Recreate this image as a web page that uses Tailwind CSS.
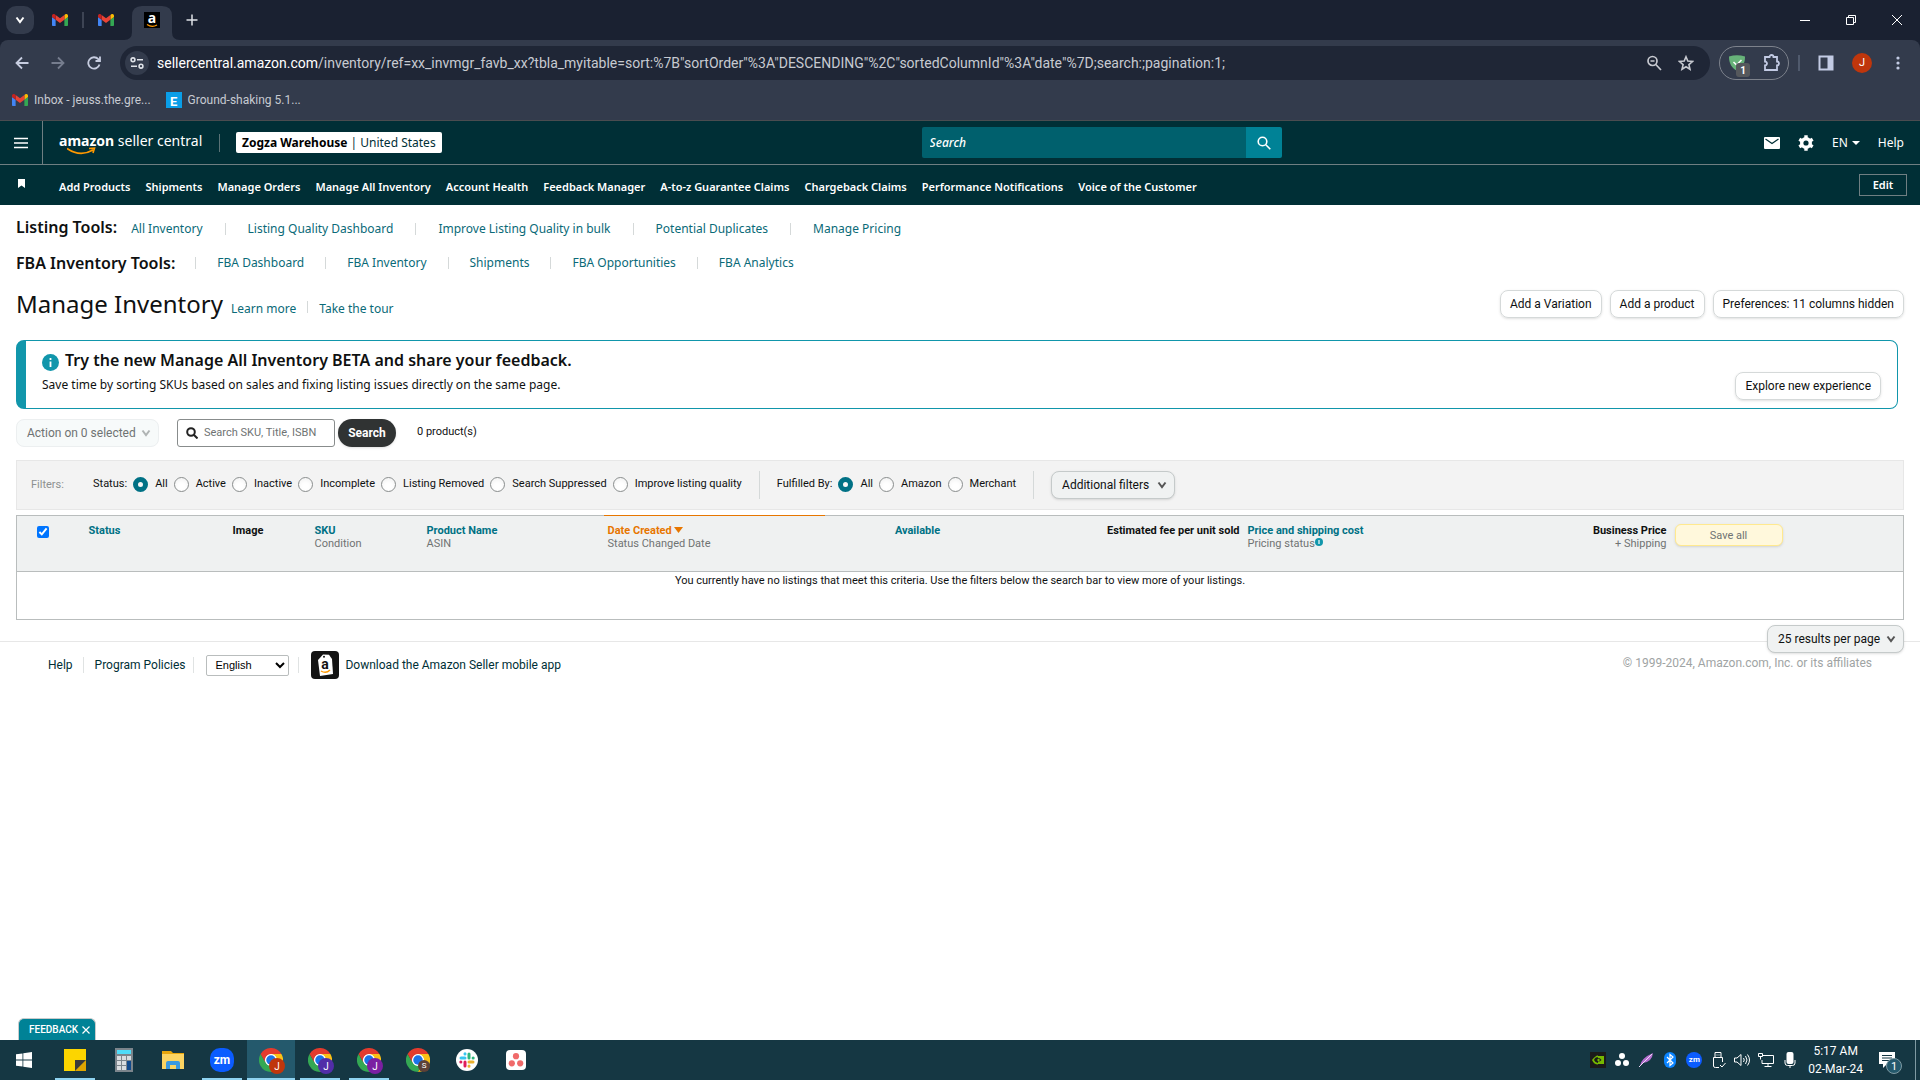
<!DOCTYPE html>
<html lang="en">
<head>
    <meta charset="UTF-8">
    <meta name="viewport" content="width=device-width, initial-scale=1.0">
    <title>Manage Inventory</title>
    <script src="https://cdn.jsdelivr.net/npm/@tailwindcss/browser@4"></script>
</head>
<body class="flex min-h-screen flex-col bg-white font-['Roboto',sans-serif] text-[11px] text-[#0f1111]">
    <!-- shared icons -->
    <svg class="hidden">
        <symbol id="gmail" viewBox="52 42 88 66">
            <path fill="#4285f4" d="M58 108h14V74L52 59v43c0 3.32 2.69 6 6 6"/>
            <path fill="#34a853" d="M120 108h14c3.32 0 6-2.69 6-6V59l-20 15"/>
            <path fill="#fbbc04" d="M120 48v26l20-15v-8c0-7.42-8.47-11.65-14.4-7.2"/>
            <path fill="#ea4335" d="M72 74V48l24 18 24-18v26L96 92"/>
            <path fill="#c5221f" d="M52 51v8l20 15V48l-5.6-4.2c-5.94-4.45-14.4-.22-14.4 7.2"/>
        </symbol>
        <symbol id="chrome" viewBox="0 0 48 48">
            <circle cx="24" cy="24" r="13" fill="#fff"/>
            <path fill="#34a853" d="M13.6 30 3.2 12A24 24 0 0 0 24 48l10.4-18a12 12 0 0 1-20.8 0z"/>
            <path fill="#fbc116" d="M34.4 30 24 48a24 24 0 0 0 20.8-36H24a12 12 0 0 1 10.4 18z"/>
            <path fill="#e33b2e" d="M24 12h20.8A24 24 0 0 0 3.2 12l10.4 18A12 12 0 0 1 24 12z"/>
            <circle cx="24" cy="24" r="9.5" fill="#1a73e8"/>
        </symbol>
        <symbol id="chevron" viewBox="0 0 10 8">
            <path d="M1.5 1.5 5 6l3.500-4.500" fill="none" stroke="currentColor" stroke-width="2"/>
        </symbol>
    </svg>

    <!-- browser -->
    <header class="bg-[#1a2131] text-[#c7cad1]">
        <div class="flex h-10 items-center pl-1.5">
            <button aria-label="Search tabs" class="grid size-7 place-items-center rounded-[10px] bg-[#333b4c]">
                <svg class="h-2 w-2.5 text-white"><use href="#chevron"/></svg>
            </button>
            <a href="#" aria-label="Gmail" class="ml-[18px]"><svg class="h-3 w-4"><use href="#gmail"/></svg></a>
            <div class="mx-[14px] h-4 w-0.5 bg-[#3d4454]"></div>
            <a href="#" aria-label="Gmail"><svg class="h-3 w-4"><use href="#gmail"/></svg></a>
            <a href="#" aria-label="Amazon" class="relative ml-[18px] grid h-full w-10 place-items-center">
                <svg class="absolute -left-2 bottom-0 h-[34px] w-14" viewBox="0 0 56 34"><path d="M0 34q8 0 8-8V10Q8 0 18 0h20q10 0 10 10v16q0 8 8 8z" fill="#333b4c"/></svg>
                <span class="relative grid size-4 place-items-center bg-black font-['Noto_Sans',sans-serif] text-[14px] font-bold leading-3 text-white"><span class="-mt-1">a</span>
                    <svg class="absolute inset-0 size-4" viewBox="0 0 16 16"><path d="M3 12.500q5 3.500 10 .5" stroke="#f90" stroke-width="1.300" fill="none"/></svg>
                </span>
            </a>
            <button aria-label="New tab" class="ml-3.5"><svg class="size-3" viewBox="0 0 12 12" stroke="#dfe2e8" stroke-width="1.500"><path d="M6 .5v11M.5 6h11"/></svg></button>
            <div class="ml-auto flex text-white">
                <button aria-label="Minimize" class="grid h-10 w-[46px] place-items-center"><svg class="size-2.5" viewBox="0 0 10 10" stroke="currentColor"><path d="M0 5.500h10"/></svg></button>
                <button aria-label="Restore" class="grid h-10 w-[46px] place-items-center"><svg class="size-2.5" viewBox="0 0 10 10" stroke="currentColor" fill="none"><path d="M.5 2.500h7v7h-7zM2.500 2.500v-2h7v7h-2"/></svg></button>
                <button aria-label="Close" class="grid h-10 w-[46px] place-items-center"><svg class="size-2.5" viewBox="0 0 10 10" stroke="currentColor"><path d="m0 0 10 10M10 0 0 10"/></svg></button>
            </div>
        </div>
        <div class="rounded-t-lg border-b border-[#4a4c50] bg-[#333b4c] pt-1.5">
            <div class="flex h-[34px] items-center pl-3 pr-[13px]">
                <button aria-label="Back" class="grid w-5 place-items-center"><svg class="size-3.5" viewBox="0 0 14 14" fill="none" stroke="#c7cde0" stroke-width="1.800"><path d="M13.500 7H1.500M7 1.500 1.500 7 7 12.500"/></svg></button>
                <button aria-label="Forward" class="ml-4 grid w-5 place-items-center"><svg class="size-3.5" viewBox="0 0 14 14" fill="none" stroke="#767d8e" stroke-width="1.800"><path d="M.5 7h12M7 1.500 12.500 7 7 12.500"/></svg></button>
                <button aria-label="Reload" class="ml-4 grid w-5 place-items-center"><svg class="size-3.5" viewBox="0 0 14 14" fill="none" stroke="#c7cde0" stroke-width="1.800"><path d="M12.500 8.500A5.700 5.700 0 1 1 11.300 3.200L13 5M13 .5V5H8.500"/></svg></button>
                <div class="ml-4 flex h-full flex-1 items-center rounded-full bg-[#1f2636] pl-[5px] pr-4">
                    <button aria-label="Site information" class="grid size-6 place-items-center rounded-full bg-[#333b4c]"><svg class="h-3 w-3.5" viewBox="0 0 14 12" fill="none" stroke="#dfe2e8" stroke-width="1.600"><circle cx="3" cy="2.800" r="1.900"/><path d="M7 2.800h6M1 9.200h6"/><circle cx="11" cy="9.200" r="1.900"/></svg></button>
                    <p class="ml-2 text-[14px] leading-5"><span class="text-white">sellercentral.amazon.com</span>/inventory/ref=xx_invmgr_favb_xx?tbla_myitable=sort:%7B"sortOrder"%3A"DESCENDING"%2C"sortedColumnId"%3A"date"%7D;search:;pagination:1;</p>
                    <button aria-label="Zoom" class="ml-auto"><svg class="size-4" viewBox="0 0 16 16" fill="none" stroke="#c7c9d0" stroke-width="1.700"><circle cx="6.500" cy="6" r="4.500"/><path d="M9.800 9.500 15 15M4.500 6h4"/></svg></button>
                    <button aria-label="Bookmark" class="ml-4"><svg class="size-4" viewBox="0 0 16 16" fill="none" stroke="#c7c9d0" stroke-width="1.600"><path d="m8 1.800 1.800 4.300 4.700.4-3.600 3.100 1.100 4.600L8 11.700l-4 2.500 1.100-4.600-3.600-3.100 4.700-.4z"/></svg></button>
                </div>
                <div class="ml-[9px] flex h-full w-[70px] items-center justify-between rounded-full border border-[#7d828c] pl-[9px] pr-[7px]">
                    <button aria-label="Blocker, 1 blocked" class="relative size-4">
                        <svg class="size-4" viewBox="0 0 16 16"><path d="M0 1.500Q8-1 16 1.500C16 9 13 13 8 16 3 13 0 9 0 1.500z" fill="#67b279"/><path d="m4.500 7 3 3 5-5" stroke="#fff" stroke-width="1.500" fill="none"/></svg>
                        <span class="absolute left-[7px] top-2 grid h-3.5 w-3.5 place-items-center rounded-[3px] bg-[#55585c] text-[10px] font-bold text-white">1</span>
                    </button>
                    <button aria-label="Extensions"><svg class="size-[18px]" viewBox="0 0 18 18" fill="none" stroke="#c3cbe4" stroke-width="1.800"><path d="M2 3h4.500a2 2 0 0 1 4 0H14v4.500a2 2 0 0 1 0 4V16H2v-4.500a2 2 0 0 0 0-4z"/></svg></button>
                </div>
                <div class="ml-[9px] h-4 w-0.5 bg-[#505a6d]"></div>
                <button aria-label="Side panel" class="ml-[18px]"><svg class="size-4" viewBox="0 0 16 16"><path d="M1.500 1.500h13v13h-13z" fill="none" stroke="#c3cbe4" stroke-width="2"/><path d="M9.500 1h5.500v14H9.500z" fill="#c3cbe4"/></svg></button>
                <button class="ml-[18px] grid size-5 place-items-center rounded-full bg-[#bf360c] text-[11px] text-white">J</button>
                <button aria-label="Menu" class="ml-[17px] grid w-[18px] place-items-center"><svg class="h-3.5 w-1" viewBox="0 0 4 14" fill="#c3cbe4"><circle cx="2" cy="2" r="1.600"/><circle cx="2" cy="7" r="1.600"/><circle cx="2" cy="12" r="1.600"/></svg></button>
            </div>
            <div class="flex h-10 items-center pl-3 text-[12px]">
                <svg class="h-3 w-4"><use href="#gmail"/></svg>
                <a href="#" class="ml-1.5">Inbox - jeuss.the.gre...</a>
                <span class="ml-[15px] grid size-4 place-items-center bg-[#0a9ee8] text-[13px] font-bold text-white">E</span>
                <a href="#" class="ml-1.5">Ground-shaking 5.1...</a>
            </div>
        </div>
    </header>

    <!-- seller central header -->
    <nav class="bg-[#002f36] font-['Noto_Sans',sans-serif] text-white">
        <div class="flex h-11 items-center border-b border-[#6f7f82]">
            <button aria-label="Menu" class="grid h-full w-[43px] place-items-center border-r border-[#6f7f82] pr-px"><svg class="h-3 w-3.5" viewBox="0 0 14 12" stroke="#fff" stroke-width="1.500"><path d="M0 1.500h14M0 6h14M0 10.500h14"/></svg></button>
            <a href="#" class="relative -mt-1 ml-4 w-36 whitespace-nowrap text-[14px] leading-5"><b>amazon</b> seller central
                <svg class="absolute left-2 top-4 h-2.5 w-[30px]" viewBox="0 0 30 10" fill="none" stroke="#f90" stroke-width="1.600"><path d="M0 1.500q13 9 26 1.500M22 1.500l5.500-.3L26 6"/></svg>
            </a>
            <div class="ml-4 h-[18px] w-px bg-[#5a7276]"></div>
            <button class="ml-4 h-[21px] whitespace-nowrap rounded-xs bg-white px-1.5 text-[12px] text-[#002f36]"><b class="text-black">Zogza Warehouse</b> | United States</button>
            <form class="absolute left-[48%] flex h-[31px] w-[360px]">
                <input type="text" aria-label="Search" placeholder="Search" class="min-w-0 flex-1 rounded-l-xs bg-[#00606d] px-2 text-[12px] font-medium italic placeholder:text-white">
                <button aria-label="Submit search" class="grid w-9 place-items-center rounded-r-xs bg-[#008296]"><svg class="size-3.5" viewBox="0 0 14 14" fill="none" stroke="#fff" stroke-width="1.600"><circle cx="5.500" cy="5.500" r="4.300"/><path d="m8.800 8.800 4.500 4.500"/></svg></button>
            </form>
            <div class="ml-auto flex items-center pr-4 text-[12px]">
                <a href="#" aria-label="Mail"><svg class="h-3 w-4" viewBox="0 0 16 12"><rect width="16" height="12" rx="1" fill="#fff"/><path d="m1.500 2 6.500 4.500L14.500 2" fill="none" stroke="#002f36" stroke-width="1.200"/></svg></a>
                <a href="#" aria-label="Settings" class="ml-[18px]"><svg class="size-4" viewBox="0 0 16 16"><circle cx="8" cy="8" r="4.200" fill="none" stroke="#fff" stroke-width="3.600"/><path d="M8 .3v15.400M1.300 4.200l13.400 7.600M1.300 11.800l13.400-7.600" stroke="#fff" stroke-width="3.400"/><circle cx="8" cy="8" r="2.600" fill="#002f36"/></svg></a>
                <button class="ml-[18px] flex items-center gap-1">EN <svg class="h-1 w-2" viewBox="0 0 8 4" fill="#fff"><path d="M0 0h8L4 4z"/></svg></button>
                <a href="#" class="ml-[18px]">Help</a>
            </div>
        </div>
        <div class="flex h-10 items-center pl-[18px] pr-[13px]">
            <svg class="-mt-1 h-[9px] w-[7px]" viewBox="0 0 7 9" fill="#fff"><path d="M0 0h7v9L3.500 6.500 0 9z"/></svg>
            <div class="ml-[34px] mt-1 flex gap-[15px] whitespace-nowrap text-[11px] font-semibold">
                <a href="#">Add Products</a>
                <a href="#">Shipments</a>
                <a href="#">Manage Orders</a>
                <a href="#">Manage All Inventory</a>
                <a href="#">Account Health</a>
                <a href="#">Feedback Manager</a>
                <a href="#">A-to-z Guarantee Claims</a>
                <a href="#">Chargeback Claims</a>
                <a href="#">Performance Notifications</a>
                <a href="#">Voice of the Customer</a>
            </div>
            <button class="ml-auto h-[22px] w-12 border border-[#6f7f82] font-semibold">Edit</button>
        </div>
    </nav>

    <main class="relative flex-1">
        <div class="px-4 pt-2.5">
            <div class="flex h-6 items-baseline gap-3.5 font-['Noto_Sans',sans-serif] text-[12px] text-[#0a6a78]">
                <h2 class="text-[16px] font-semibold leading-6 text-[#0f1111]">Listing Tools:</h2>
                <div class="flex items-center gap-[22px]">
                    <a href="#">All Inventory</a><i class="h-3 w-px bg-[#d5d9d9]"></i>
                    <a href="#">Listing Quality Dashboard</a><i class="h-3 w-px bg-[#d5d9d9]"></i>
                    <a href="#">Improve Listing Quality in bulk</a><i class="h-3 w-px bg-[#d5d9d9]"></i>
                    <a href="#">Potential Duplicates</a><i class="h-3 w-px bg-[#d5d9d9]"></i>
                    <a href="#">Manage Pricing</a>
                </div>
            </div>
            <div class="mt-3 flex h-6 items-baseline gap-5 font-['Noto_Sans',sans-serif] text-[12px] text-[#0a6a78]">
                <h2 class="text-[16px] font-semibold leading-6 text-[#0f1111]">FBA Inventory Tools:</h2>
                <div class="flex items-center gap-[21px]">
                    <i class="h-3 w-px bg-[#d5d9d9]"></i>
                    <a href="#">FBA Dashboard</a><i class="h-3 w-px bg-[#d5d9d9]"></i>
                    <a href="#">FBA Inventory</a><i class="h-3 w-px bg-[#d5d9d9]"></i>
                    <a href="#">Shipments</a><i class="h-3 w-px bg-[#d5d9d9]"></i>
                    <a href="#">FBA Opportunities</a><i class="h-3 w-px bg-[#d5d9d9]"></i>
                    <a href="#">FBA Analytics</a>
                </div>
            </div>
            <div class="mt-[11px] flex items-center">
                <div class="flex items-baseline font-['Noto_Sans',sans-serif] text-[12px] text-[#0a6a78]">
                    <h1 class="text-[24px] leading-9 text-[#0f1111]">Manage Inventory</h1>
                    <a href="#" class="ml-2">Learn more</a>
                    <i class="mx-[11px] h-3 w-px bg-[#d5d9d9]"></i>
                    <a href="#">Take the tour</a>
                </div>
                <div class="ml-auto flex gap-2 text-[12px]">
                    <button class="h-7 rounded-lg border border-[#d5d9d9] px-[9px] shadow-sm">Add a Variation</button>
                    <button class="h-7 rounded-lg border border-[#d5d9d9] px-[9px] shadow-sm">Add a product</button>
                    <button class="h-7 rounded-lg border border-[#d5d9d9] px-[9px] shadow-sm">Preferences: 11 columns hidden</button>
                </div>
            </div>

            <section class="mr-1.5 mt-[18px] flex h-[69px] rounded-lg border border-l-10 border-[#1196ab] pl-4 pr-4">
                <div class="pt-[7px] font-['Noto_Sans',sans-serif]">
                    <h3 class="flex items-center gap-1.5 text-[16px] font-semibold leading-6">
                        <svg class="mt-1 size-[17px]" viewBox="0 0 17 17"><circle cx="8.500" cy="8.500" r="8.500" fill="#1196ab"/><path d="M8.500 7.500v5.500M8.500 4v2" stroke="#fff" stroke-width="1.800"/></svg>
                        Try the new Manage All Inventory BETA and share your feedback.
                    </h3>
                    <p class="mt-px text-[12px] leading-6">Save time by sorting SKUs based on sales and fixing listing issues directly on the same page.</p>
                </div>
                <button class="mb-2 ml-auto h-7 self-end rounded-lg border border-[#d5d9d9] px-[9px] text-[12px] shadow-sm">Explore new experience</button>
            </section>

            <div class="mt-2.5 flex h-7 items-center">
                <button disabled class="flex h-7 w-[143px] items-center justify-between whitespace-nowrap rounded-lg border border-[#eceff0] bg-[#f7fafa] pl-2.5 pr-[7px] text-[12px] text-[#6f7373]">Action on 0 selected <svg class="h-2 w-2.5 text-[#b0b4b4]"><use href="#chevron"/></svg></button>
                <label class="ml-[18px] flex h-7 w-[158px] items-center gap-1.5 rounded-[3px] border border-[#888c8c] px-2">
                    <svg class="size-3 shrink-0" viewBox="0 0 12 12" fill="none" stroke="#222" stroke-width="2"><circle cx="5" cy="5" r="3.800"/><path d="m7.800 7.800 3.700 3.700"/></svg>
                    <input type="text" aria-label="Search listings" placeholder="Search SKU, Title, ISBN" class="w-full min-w-0 text-[11px] placeholder:text-[#6f7373]">
                </label>
                <button class="ml-[3px] h-7 w-[58px] rounded-full bg-[#303333] text-[12px] font-bold text-white shadow-sm">Search</button>
                <span class="-mt-0.5 ml-[21px]">0 product(s)</span>
            </div>

            <form class="mt-[13px] flex h-[50px] items-center whitespace-nowrap border border-[#e7e7e7] bg-[#f3f3f3] px-3.5">
                <span class="w-[62px] text-[#8d9191]">Filters:</span>
                <fieldset class="-mt-0.5 flex items-center">
                    <legend class="contents"><span>Status:</span></legend>
                    <label class="ml-1.5 flex items-center gap-[7px]"><input type="radio" name="status" checked class="size-[15px] appearance-none rounded-full border border-[#888c8c] bg-white shadow-inner checked:border-5 checked:border-[#007185]">All</label>
                    <label class="ml-1.5 flex items-center gap-[7px]"><input type="radio" name="status" class="size-[15px] appearance-none rounded-full border border-[#888c8c] bg-white shadow-inner checked:border-5 checked:border-[#007185]">Active</label>
                    <label class="ml-1.5 flex items-center gap-[7px]"><input type="radio" name="status" class="size-[15px] appearance-none rounded-full border border-[#888c8c] bg-white shadow-inner checked:border-5 checked:border-[#007185]">Inactive</label>
                    <label class="ml-1.5 flex items-center gap-[7px]"><input type="radio" name="status" class="size-[15px] appearance-none rounded-full border border-[#888c8c] bg-white shadow-inner checked:border-5 checked:border-[#007185]">Incomplete</label>
                    <label class="ml-1.5 flex items-center gap-[7px]"><input type="radio" name="status" class="size-[15px] appearance-none rounded-full border border-[#888c8c] bg-white shadow-inner checked:border-5 checked:border-[#007185]">Listing Removed</label>
                    <label class="ml-1.5 flex items-center gap-[7px]"><input type="radio" name="status" class="size-[15px] appearance-none rounded-full border border-[#888c8c] bg-white shadow-inner checked:border-5 checked:border-[#007185]">Search Suppressed</label>
                    <label class="ml-1.5 flex items-center gap-[7px]"><input type="radio" name="status" class="size-[15px] appearance-none rounded-full border border-[#888c8c] bg-white shadow-inner checked:border-5 checked:border-[#007185]">Improve listing quality</label>
                </fieldset>
                <i class="mx-[17px] h-7 w-px bg-[#d5d9d9]"></i>
                <fieldset class="-mt-0.5 flex items-center">
                    <legend class="contents"><span>Fulfilled By:</span></legend>
                    <label class="ml-1.5 flex items-center gap-[7px]"><input type="radio" name="fulfilled" checked class="size-[15px] appearance-none rounded-full border border-[#888c8c] bg-white shadow-inner checked:border-5 checked:border-[#007185]">All</label>
                    <label class="ml-1.5 flex items-center gap-[7px]"><input type="radio" name="fulfilled" class="size-[15px] appearance-none rounded-full border border-[#888c8c] bg-white shadow-inner checked:border-5 checked:border-[#007185]">Amazon</label>
                    <label class="ml-1.5 flex items-center gap-[7px]"><input type="radio" name="fulfilled" class="size-[15px] appearance-none rounded-full border border-[#888c8c] bg-white shadow-inner checked:border-5 checked:border-[#007185]">Merchant</label>
                </fieldset>
                <i class="mx-[17px] h-7 w-px bg-[#d5d9d9]"></i>
                <button type="button" class="flex h-7 w-[124px] items-center justify-between rounded-lg border border-[#c5caca] bg-[#f0f2f2] pl-2.5 pr-[7px] text-[12px] shadow">Additional filters <svg class="h-2 w-2.5 text-[#555]"><use href="#chevron"/></svg></button>
            </form>

            <table class="mt-[5px] w-full table-fixed border border-[#b9bdbd] text-left leading-[13px]">
                <colgroup>
                    <col class="w-[66px]"><col class="w-36"><col class="w-[81px]"><col class="w-28"><col class="w-[184px]"><col class="w-[221px]"><col class="w-[186px]"><col class="w-[233px]"><col class="w-[257px]"><col class="w-[170px]"><col>
                </colgroup>
                <thead class="bg-[#eff1f1]">
                    <tr class="h-14 border-b border-[#b9bdbd] align-top">
                        <th class="pl-5 pt-2.5"><input type="checkbox" checked aria-label="Select all" class="block size-3 accent-[#0075ff]"></th>
                        <th class="pl-1.5 pt-2 text-[#007185]">Status</th>
                        <th class="pl-1.5 pt-2">Image</th>
                        <th class="pl-[7px] pt-2 text-[#007185]">SKU<br><span class="font-normal text-[#6f7373]">Condition</span></th>
                        <th class="pl-[7px] pt-2 text-[#007185]">Product Name<br><span class="font-normal text-[#6f7373]">ASIN</span></th>
                        <th class="border-t border-[#e77600] pl-1 pt-2 text-[#e77600]">Date Created <svg class="mb-0.5 inline h-1.5 w-[9px]" viewBox="0 0 9 6" fill="#e77600"><path d="M0 0h9L4.500 6z"/></svg><br><span class="font-normal text-[#6f7373]">Status Changed Date</span></th>
                        <th class="pt-2 text-center text-[#007185]">Available</th>
                        <th class="pr-1 pt-2 text-right">Estimated fee per unit sold</th>
                        <th class="pl-1 pt-2 text-[#007185]">Price and shipping cost<br><span class="font-normal text-[#6f7373]">Pricing status</span><svg class="mb-1 inline size-2" viewBox="0 0 8 8"><circle cx="4" cy="4" r="4" fill="#1196ab"/><path d="M4 2v4" stroke="#fff" stroke-width="1.200"/></svg></th>
                        <th class="pr-1 pt-2 text-right">Business Price<br><span class="font-normal text-[#6f7373]">+ Shipping</span></th>
                        <th class="pl-1 pt-2"><button disabled class="h-[22px] w-[108px] rounded-md border border-[#ffe98f] bg-[#fff8dc] font-normal text-[#6f7373] shadow-sm">Save all</button></th>
                    </tr>
                </thead>
                <tbody>
                    <tr class="h-12 align-top"><td colspan="11" class="pt-0.5 text-center">You currently have no listings that meet this criteria. Use the filters below the search bar to view more of your listings.</td></tr>
                </tbody>
            </table>
        </div>

        <footer class="relative mt-[21px] flex h-[47px] items-center border-t border-[#e7e7e7] pl-12 pr-12 text-[12px] text-[#002f36]">
            <button class="absolute -top-[17px] right-4 flex h-7 w-[137px] items-center justify-between whitespace-nowrap rounded-lg border border-[#c5caca] bg-[#f0f2f2] pl-2.5 pr-[7px] text-[#0f1111] shadow">25 results per page <svg class="h-2 w-2.5 text-[#555]"><use href="#chevron"/></svg></button>
            <a href="#">Help</a>
            <i class="ml-2.5 mr-[11px] h-4 w-px bg-[#e0e3e3]"></i>
            <a href="#">Program Policies</a>
            <i class="ml-2 mr-3 h-4 w-px bg-[#e0e3e3]"></i>
            <select aria-label="Language" class="h-[21px] w-[83px] rounded-xs border border-[#b9bdbd] bg-white pl-1 font-['Liberation_Sans',sans-serif] text-[11px] text-black"><option>English</option></select>
            <i class="ml-[9px] mr-3 h-4 w-px bg-[#e0e3e3]"></i>
            <svg class="size-7" viewBox="0 0 28 28"><rect width="28" height="28" rx="4" fill="#131313"/><path d="M7 9l5-5.500 6 .2L21 8l1 15-13 2z" fill="#fff"/><circle cx="13" cy="5.800" r="1" fill="#131313"/><text x="14" y="18" text-anchor="middle" font-size="14" font-weight="700" fill="#111">a</text><path d="M10 20q5 3 9-1" stroke="#f90" stroke-width="1.400" fill="none"/></svg>
            <a href="#" class="ml-1.5">Download the Amazon Seller mobile app</a>
            <span class="-mt-1 ml-auto text-[#a0a4a4]">© 1999-2024, Amazon.com, Inc. or its affiliates</span>
        </footer>

        <div class="absolute bottom-0 left-[18px] flex h-[22px] items-center gap-1 rounded-t-md border border-b-0 border-[#c9cccc] bg-[#008296] pl-2.5 pr-[5px] text-[10px] font-medium text-white">FEEDBACK
            <button aria-label="Close feedback"><svg class="size-2" viewBox="0 0 8 8" stroke="#fff" stroke-width="1.200"><path d="m.5.5 7 7M7.500.5l-7 7"/></svg></button>
        </div>
    </main>

    <!-- taskbar -->
    <div class="flex h-10 items-center bg-[#153743] text-white">
        <button aria-label="Start" class="grid h-full w-12 place-items-center"><svg class="size-4" viewBox="0 0 16 16" fill="#fff"><path d="M0 2.300 6.500 1.400v6.100H0zM7.300 1.300 16 0v7.500H7.300zM0 8.400h6.500v6.200L0 13.700zM7.300 8.400H16V16l-8.700-1.300z"/></svg></button>
        <div class="ml-[3px] flex h-full gap-px">
            <button aria-label="Sticky Notes" class="grid w-12 place-items-center bg-[linear-gradient(#8fd3f0,#8fd3f0)] bg-[length:40px_2px] bg-bottom bg-no-repeat"><svg class="size-[22px]" viewBox="0 0 22 22"><path d="M0 0h22v12L12 22H0z" fill="#fcd500"/><path d="M22 11v11H11z" fill="#dfa500"/><path d="M11 11h11L11 22z" fill="#3a3a3a"/></svg></button>
            <button aria-label="Calculator" class="grid w-12 place-items-center"><svg class="h-6 w-[18px]" viewBox="0 0 18 24"><rect width="18" height="24" fill="#7b858c"/><path d="M2 2h14v4H2z" fill="#4fdcf8"/><path d="M2 8h4v4H2zM7 8h4v4H7zM12 8h4v4h-4zM2 13h4v4H2zM7 13h4v4H7zM2 18h4v4H2zM7 18h4v4H7z" fill="#d9dde0"/><path d="M12 13h4v9h-4z" fill="#114a8b"/></svg></button>
            <button aria-label="File Explorer" class="grid w-12 place-items-center"><svg class="h-[18px] w-[22px]" viewBox="0 0 22 18"><path d="M0 0h9l2 2h11v16H0z" fill="#e8a60c"/><path d="M0 3h22v15H0z" fill="#fcd462"/><path d="M4 18v-6q0-2 2-2h10q2 0 2 2v6h-4v-4H8v4z" fill="#3b9ae0"/></svg></button>
            <button aria-label="Zoom" class="grid w-12 place-items-center bg-[linear-gradient(#8fd3f0,#8fd3f0)] bg-[length:40px_2px] bg-bottom bg-no-repeat"><span class="grid size-6 place-items-center rounded-[10px] bg-[#0b5cff] text-[12px] font-bold">zm</span></button>
            <button aria-label="Chrome" class="grid w-12 place-items-center border-b-2 border-[#8fd3f0] bg-[#24596c] pt-0.5"><span class="relative"><svg class="size-6"><use href="#chrome"/></svg><span class="absolute -bottom-0.5 -right-0.5 grid size-4 place-items-center rounded-full bg-[#bf360c] text-[10px]">J</span></span></button>
            <button aria-label="Chrome" class="grid w-12 place-items-center bg-[linear-gradient(#8fd3f0,#8fd3f0)] bg-[length:40px_2px] bg-bottom bg-no-repeat"><span class="relative"><svg class="size-6"><use href="#chrome"/></svg><span class="absolute -bottom-0.5 -right-0.5 grid size-4 place-items-center rounded-full bg-[#512da8] text-[10px]">J</span></span></button>
            <button aria-label="Chrome" class="grid w-12 place-items-center bg-[linear-gradient(#8fd3f0,#8fd3f0)] bg-[length:40px_2px] bg-bottom bg-no-repeat"><span class="relative"><svg class="size-6"><use href="#chrome"/></svg><span class="absolute -bottom-0.5 -right-0.5 grid size-4 place-items-center rounded-full bg-[#7b1fa2] text-[10px]">J</span></span></button>
            <button aria-label="Chrome" class="grid w-12 place-items-center"><span class="relative"><svg class="size-6"><use href="#chrome"/></svg><span class="absolute bottom-0 right-0 grid size-3 place-items-center rounded-full bg-[#5d4037] text-[8px]">S</span></span></button>
            <button aria-label="Slack" class="grid w-12 place-items-center"><svg class="size-[22px]" viewBox="0 0 22 22" stroke-width="3" stroke-linecap="round"><circle cx="11" cy="11" r="11" fill="#fff"/><path d="M5 9h4M9 4.800v.1" stroke="#36c5f0"/><path d="M13 5v4M17.200 9h-.1" stroke="#2eb67d"/><path d="M13 13h4M13 17.200v-.1" stroke="#ecb22e"/><path d="M9 13v4M4.800 13h.1" stroke="#e01e5a"/></svg></button>
            <button aria-label="Asana" class="grid w-12 place-items-center"><svg class="size-5" viewBox="0 0 20 20" fill="#f06a6a"><rect width="20" height="20" rx="4" fill="#fff"/><circle cx="10" cy="6.200" r="3.100"/><circle cx="5.800" cy="13.300" r="3.100"/><circle cx="14.200" cy="13.300" r="3.100"/></svg></button>
        </div>
        <div class="ml-auto flex h-full items-center gap-2">
            <svg class="size-4" viewBox="0 0 16 16"><rect width="16" height="16" fill="#1b1b1b"/><path d="M2 8q4-5 6-4.500V5Q5 5 4 8q1.500 3 4 3v1.500Q4 12.500 2 8zM8 4h6v8H8z" fill="#76b900"/><path d="M6 8q2.500-4 5.500 0Q8.500 11 6 8z" fill="#1b1b1b"/><circle cx="8.500" cy="8" r="1.200" fill="#76b900"/></svg>
            <svg class="size-4" viewBox="0 0 16 16" fill="#fff"><circle cx="8" cy="4" r="3"/><circle cx="4" cy="11" r="3"/><circle cx="12" cy="11" r="3"/></svg>
            <svg class="size-4" viewBox="0 0 16 16"><path d="M2 14Q3 6 15 1q-1 9-10 10z" fill="#b46fd0"/><path d="M1 15 14 2" stroke="#efd9f7"/></svg>
            <svg class="size-4" viewBox="0 0 16 16"><rect x="2" width="12" height="16" rx="6" fill="#0a84ff"/><path d="m5 5 6 6-3 2.500v-11L11 5l-6 6" fill="none" stroke="#fff" stroke-width="1.200"/></svg>
            <span class="grid size-4 place-items-center rounded-full bg-[#0b5cff] text-[8px] font-bold">zm</span>
            <svg class="size-4" viewBox="0 0 16 16" fill="none" stroke="#fff"><path d="M5 5.500v-5h6v5M3.500 14V5.500h9V10M3.500 14q0 1.500 2 1.500H9M7 2.500v1M9 2.500v1M10 13l2 2 3.500-4"/></svg>
            <svg class="size-4" viewBox="0 0 16 16" fill="none" stroke="#fff"><path d="M.5 6v4H3l4 3.500v-11L3 6zM9.500 6q1.500 2 0 4M11.500 4q3 4 0 8M13.500 2.500q4 5.500 0 11"/></svg>
            <svg class="size-4" viewBox="0 0 16 16" fill="none" stroke="#fff"><path d="M5 3.500h10.500v8H4V8M10 11.500v3M6.500 14.500h7M.5 1.500h4v3h-4zM2.500 4.500v3"/></svg>
            <svg class="size-4" viewBox="0 0 16 16" fill="#fff"><rect x="4.500" width="7" height="12" rx="2"/><path d="M3 8v3q0 2.500 2.500 2.500h5Q13 13.500 13 11V8M8 13v3" fill="none" stroke="#fff"/></svg>
            <time class="ml-0.5 text-center text-[12px] leading-[18px]">5:17 AM<br>02-Mar-24</time>
            <div class="relative ml-1 h-10 w-8">
                <svg class="absolute left-1 top-3 h-4 w-4" viewBox="0 0 16 16"><path d="M0 0h16v12H8l-4 4v-4H0z" fill="#fff"/><path d="M3 3.500h10M3 6h10M3 8.500h7" stroke="#153743"/></svg>
                <span class="absolute left-[11px] top-[18px] grid size-4 place-items-center rounded-full border border-[#7f9aa3] bg-[#24596c] text-[11px]">1</span>
            </div>
            <div class="mr-1 h-full w-px bg-[#7f9aa3]"></div>
        </div>
    </div>
</body>
</html>
